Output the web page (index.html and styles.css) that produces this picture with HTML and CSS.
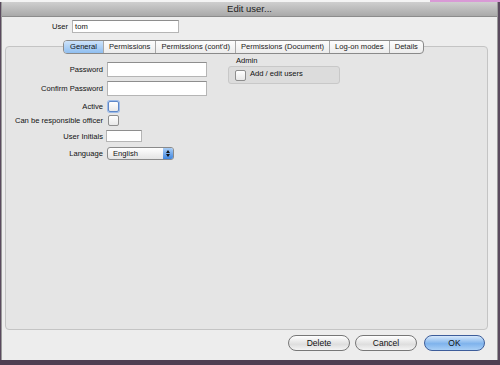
FILE: index.html
```html
<!DOCTYPE html>
<html lang="en">
<head>
    <meta charset="UTF-8">
    <title>Edit user...</title>
    <link rel="stylesheet" href="styles.css">
</head>
<body>

<div class="topstrip"></div>
<div class="window">
    <div class="titlebar">Edit user...</div>
    <div class="content">
        <div class="user-row">
            <label>User</label>
            <div class="field user-field">tom</div>
        </div>

        <div class="tabbox">
            <div class="tabs">
                <div class="tab active">General</div>
                <div class="tab">Permissions</div>
                <div class="tab">Permissions (cont'd)</div>
                <div class="tab">Permissions (Document)</div>
                <div class="tab">Log-on modes</div>
                <div class="tab">Details</div>
            </div>
            <div class="pane">
                <div class="form">
                    <div class="row r-pass">
                        <span class="lbl">Password</span>
                        <div class="field wide"></div>
                    </div>
                    <div class="row r-confirm">
                        <span class="lbl">Confirm Password</span>
                        <div class="field wide"></div>
                    </div>
                    <div class="row r-active">
                        <span class="lbl">Active</span>
                        <div class="check focus"></div>
                    </div>
                    <div class="row r-officer">
                        <span class="lbl">Can be responsible officer</span>
                        <div class="check"></div>
                    </div>
                    <div class="row r-init">
                        <span class="lbl">User Initials</span>
                        <div class="field short"></div>
                    </div>
                    <div class="row r-lang">
                        <span class="lbl">Language</span>
                        <div class="select">English<span class="arrows"></span></div>
                    </div>
                </div>
                <div class="admin">
                    <div class="admin-title">Admin</div>
                    <div class="admin-box">
                        <div class="check"></div>
                        <span>Add / edit users</span>
                    </div>
                </div>
            </div>
        </div>

        <div class="buttons">
            <div class="btn">Delete</div>
            <div class="btn">Cancel</div>
            <div class="btn default">OK</div>
        </div>
    </div>
</div>
<div class="desktop"></div>

</body>
</html>
```

FILE: styles.css
```css
body {
    margin: 0;
    width: 500px;
    height: 365px;
    overflow: hidden;
    background: #5a4a5e;
    font-family: "Liberation Sans", Arial, sans-serif;
    font-size: 7.6px;
    color: #111;
    white-space: nowrap;
}
.topstrip {
    height: 2px;
    background: linear-gradient(to right, #f4f4f4 0, #f4f4f4 430px, #d99ad6 430px);
}
.window {
    margin-left: 1px;
    width: 497px;
    height: 358px;
    background: #ededed;
    border-left: 1px solid #9a9a9a;
    border-right: 1px solid #9a9a9a;
    box-sizing: border-box;
}
.titlebar {
    height: 14px;
    line-height: 14px;
    text-align: center;
    font-size: 9.5px;
    color: #222;
    background: linear-gradient(#cfcfcf, #a9a9a9);
    border-bottom: 1px solid #8c8c8c;
}
.content {
    position: relative;
    height: 343px;
}
.user-row {
    display: flex;
    align-items: center;
    padding: 3px 0 0 50px;
}
.user-row label {
    margin-right: 4px;
}
.field {
    background: #fff;
    border: 1px solid #b5b5b5;
    border-top-color: #8e8e8e;
    box-sizing: border-box;
    height: 14px;
}
.user-field {
    width: 107px;
    height: 13px;
    line-height: 11px;
    padding-left: 2px;
}
.tabbox {
    position: relative;
    margin: 13px 0 0 3px;
    width: 483px;
    height: 284px;
    border: 1px solid #c4c4c4;
    border-radius: 4px;
    background: #e5e5e5;
    box-sizing: border-box;
}
.tabs {
    position: absolute;
    top: -7px;
    left: 57px;
    display: flex;
    height: 14px;
    border: 1px solid #8a8a8a;
    border-radius: 4px;
    background: linear-gradient(#fdfdfd, #ececec);
    box-sizing: border-box;
    overflow: hidden;
}
.tab {
    line-height: 12px;
    padding: 0 5px;
    border-left: 1px solid #a8a8a8;
    color: #222;
}
.tab:first-child {
    border-left: none;
}
.tab.active {
    padding: 0 6px;
    background: linear-gradient(#cde3fa, #8fbef0);
    color: #111;
}
.pane {
    display: flex;
    padding: 9px 0 0 0;
}
.form {
    width: 222px;
}
.row {
    display: flex;
    align-items: center;
}
.lbl {
    width: 97px;
    text-align: right;
    margin-right: 4px;
}
.r-pass { margin-top: 6px; }
.r-confirm { margin-top: 4px; }
.r-active { margin-top: 5px; }
.r-officer { margin-top: 3px; }
.r-init { margin-top: 4px; }
.r-lang { margin-top: 5px; }
.wide {
    width: 100px;
    height: 15px;
}
.short {
    width: 36px;
    height: 12px;
    margin-left: -1px;
}
.check {
    width: 9px;
    height: 9px;
    border: 1px solid #8e8e8e;
    border-radius: 2px;
    background: linear-gradient(#fff, #e8e8e8);
    margin-left: 1px;
}
.check.focus {
    border-color: #5d87c8;
    box-shadow: 0 0 0 1px #9dbbe8;
}
.select {
    position: relative;
    width: 67px;
    height: 13px;
    line-height: 12px;
    padding-left: 5px;
    box-sizing: border-box;
    border: 1px solid #8a8a8a;
    border-radius: 3px;
    background: linear-gradient(#fefefe, #e4e4e4);
}
.arrows {
    position: absolute;
    right: 0;
    top: 0;
    width: 10px;
    height: 11px;
    border-radius: 0 2px 2px 0;
    background: linear-gradient(#a9cdf5, #3f86e0);
}
.arrows::before, .arrows::after {
    content: "";
    position: absolute;
    left: 3px;
    border-left: 2px solid transparent;
    border-right: 2px solid transparent;
}
.arrows::before {
    top: 2px;
    border-bottom: 3px solid #111;
}
.arrows::after {
    top: 6px;
    border-top: 3px solid #111;
}
.admin {
    margin-left: 0;
    margin-top: 0;
}
.admin-title {
    padding-left: 8px;
    line-height: 10px;
}
.admin-box {
    display: flex;
    align-items: flex-start;
    width: 112px;
    height: 18px;
    border: 1px solid #c8c8c8;
    border-radius: 3px;
    background: #dcdcdc;
    box-sizing: border-box;
    padding: 2px 0 0 6px;
}
.admin-box .check {
    margin: 1px 4px 0 0;
}
.buttons {
    display: flex;
    justify-content: flex-end;
    gap: 5px;
    padding: 5px 12px 0 0;
}
.btn {
    width: 62px;
    height: 16px;
    line-height: 14px;
    text-align: center;
    font-size: 8.5px;
    border: 1px solid #777;
    border-radius: 8px;
    background: linear-gradient(#ffffff, #dedede 60%, #f4f4f4);
    box-sizing: border-box;
}
.btn.default {
    width: 61px;
    margin-left: 2px;
    border-color: #3d5d9a;
    background: linear-gradient(#d6e8fb, #7fb3ec 55%, #a9cff6);
}
.desktop {
    height: 5px;
    background: #4f3f52;
}
```
